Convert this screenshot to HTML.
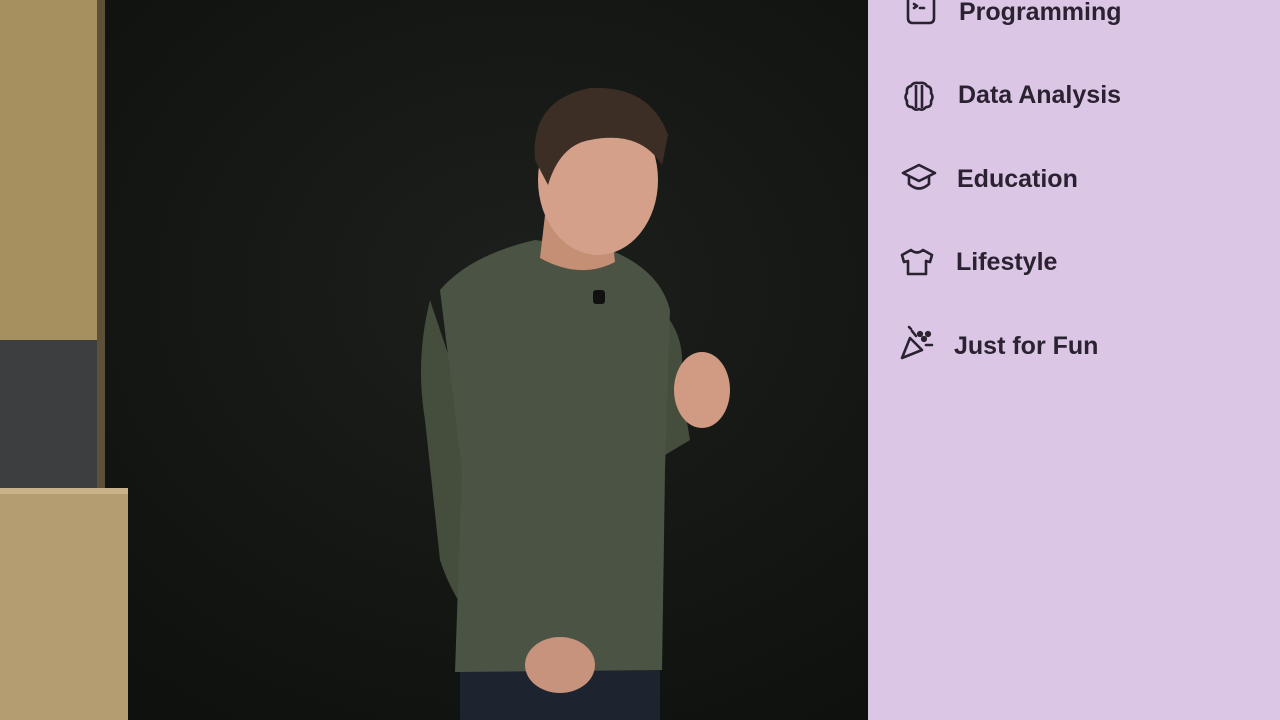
<!DOCTYPE html>
<html><head><meta charset="utf-8"><style>
html,body{margin:0;padding:0;width:1280px;height:720px;overflow:hidden;background:#121412}
.panel{position:absolute;left:868px;top:0;width:412px;height:720px;background:#dbc6e6}
.item{position:absolute;font-family:"Liberation Sans",sans-serif;font-size:25px;font-weight:bold;color:#2a2230;letter-spacing:0px}
svg.ic{position:absolute}
</style></head><body>
<svg width="870" height="720" style="position:absolute;left:0;top:0">
<defs><radialGradient id="g" cx="0.6" cy="0.4" r="0.7"><stop offset="0" stop-color="#1c1f1c"/><stop offset="1" stop-color="#0f110f"/></radialGradient></defs>
<rect x="0" y="0" width="870" height="720" fill="url(#g)"/>
<rect x="0" y="0" width="103" height="490" fill="#a6905f"/>
<rect x="97" y="0" width="8" height="490" fill="#5c5039"/>
<rect x="0" y="340" width="97" height="148" fill="#3c3e40"/>
<rect x="0" y="488" width="128" height="232" fill="#b59d72"/>
<rect x="0" y="488" width="128" height="6" fill="#c9b28a"/>
<rect x="460" y="660" width="200" height="60" fill="#1e2330"/>
<path d="M430 300 Q415 360 425 420 L440 560 Q460 620 500 640 L530 650 L545 615 L500 590 L485 520 L470 420 Z" fill="#454d3d"/>
<path d="M650 300 Q690 330 680 380 L690 440 L665 455 L655 380 Z" fill="#454d3d"/>
<path d="M440 290 Q470 255 535 240 L610 250 Q660 270 670 310 L665 470 L662 670 L455 672 L462 470 Z" fill="#4b5444"/>
<path d="M545 215 L610 215 L615 262 Q580 280 540 258 Z" fill="#c58f76"/>
<ellipse cx="598" cy="180" rx="60" ry="75" fill="#d4a08a"/>
<path d="M535 160 Q530 100 590 88 Q650 85 668 135 L662 165 Q640 130 590 140 Q560 145 548 185 Z" fill="#3d2e25"/>
<ellipse cx="702" cy="390" rx="28" ry="38" fill="#d09a83"/>
<ellipse cx="560" cy="665" rx="35" ry="28" fill="#c8937c"/>
<rect x="593" y="290" width="12" height="14" rx="3" fill="#111"/>
</svg>
<div class="panel"></div>
<svg class="ic" style="left:905px;top:0" width="32" height="26" viewBox="0 0 32 26" fill="none" stroke="#2a2230" stroke-width="2.6" stroke-linecap="round" stroke-linejoin="round"><path d="M3 -2 V18 Q3 23 8 23 H24 Q29 23 29 18 V-2"/><path d="M9 4 L12 6 L9 8 M15 8 H19"/></svg>
<div class="item" style="left:959px;top:-2px">Programming</div>
<svg class="ic" style="left:903px;top:80px" width="32" height="32" viewBox="0 0 32 32" fill="none" stroke="#2a2230" stroke-width="2.6" stroke-linejoin="round"><path d="M16 3 Q10 2 8 6 Q3 7 4 13 Q1 17 4 21 Q3 27 9 27 Q12 31 16 29 Q20 31 23 27 Q29 27 28 21 Q31 17 28 13 Q29 7 24 6 Q22 2 16 3 Z"/><path d="M13 5 V28 M19 5 V28"/></svg>
<div class="item" style="left:958px;top:81px">Data Analysis</div>
<svg class="ic" style="left:900px;top:162px" width="38" height="32" viewBox="0 0 38 32" fill="none" stroke="#2a2230" stroke-width="2.6" stroke-linejoin="round"><path d="M19 3 L35 11 L19 19 L3 11 Z"/><path d="M9 14 V22 Q19 31 29 22 V14"/></svg>
<div class="item" style="left:957px;top:165px">Education</div>
<svg class="ic" style="left:899px;top:247px" width="36" height="30" viewBox="0 0 36 30" fill="none" stroke="#2a2230" stroke-width="2.6" stroke-linejoin="round"><path d="M12 3 Q18 8 24 3 L33 8 L31 15 L27 14 V27 H9 V14 L5 15 L3 8 Z"/></svg>
<div class="item" style="left:956px;top:248px">Lifestyle</div>
<svg class="ic" style="left:898px;top:324px" width="38" height="38" viewBox="0 0 38 38" fill="none" stroke="#2a2230" stroke-width="2.6" stroke-linejoin="round" stroke-linecap="round"><path d="M12 14 L4 34 L24 26 Z"/><path d="M14 7 L18 12 M11 3 L13 5"/><circle cx="22" cy="10" r="1.8" fill="#2a2230"/><circle cx="30" cy="10" r="1.8" fill="#2a2230"/><circle cx="26" cy="15" r="1.8" fill="#2a2230"/><path d="M28 21 H34"/></svg>
<div class="item" style="left:954px;top:332px">Just for Fun</div>
</body></html>
